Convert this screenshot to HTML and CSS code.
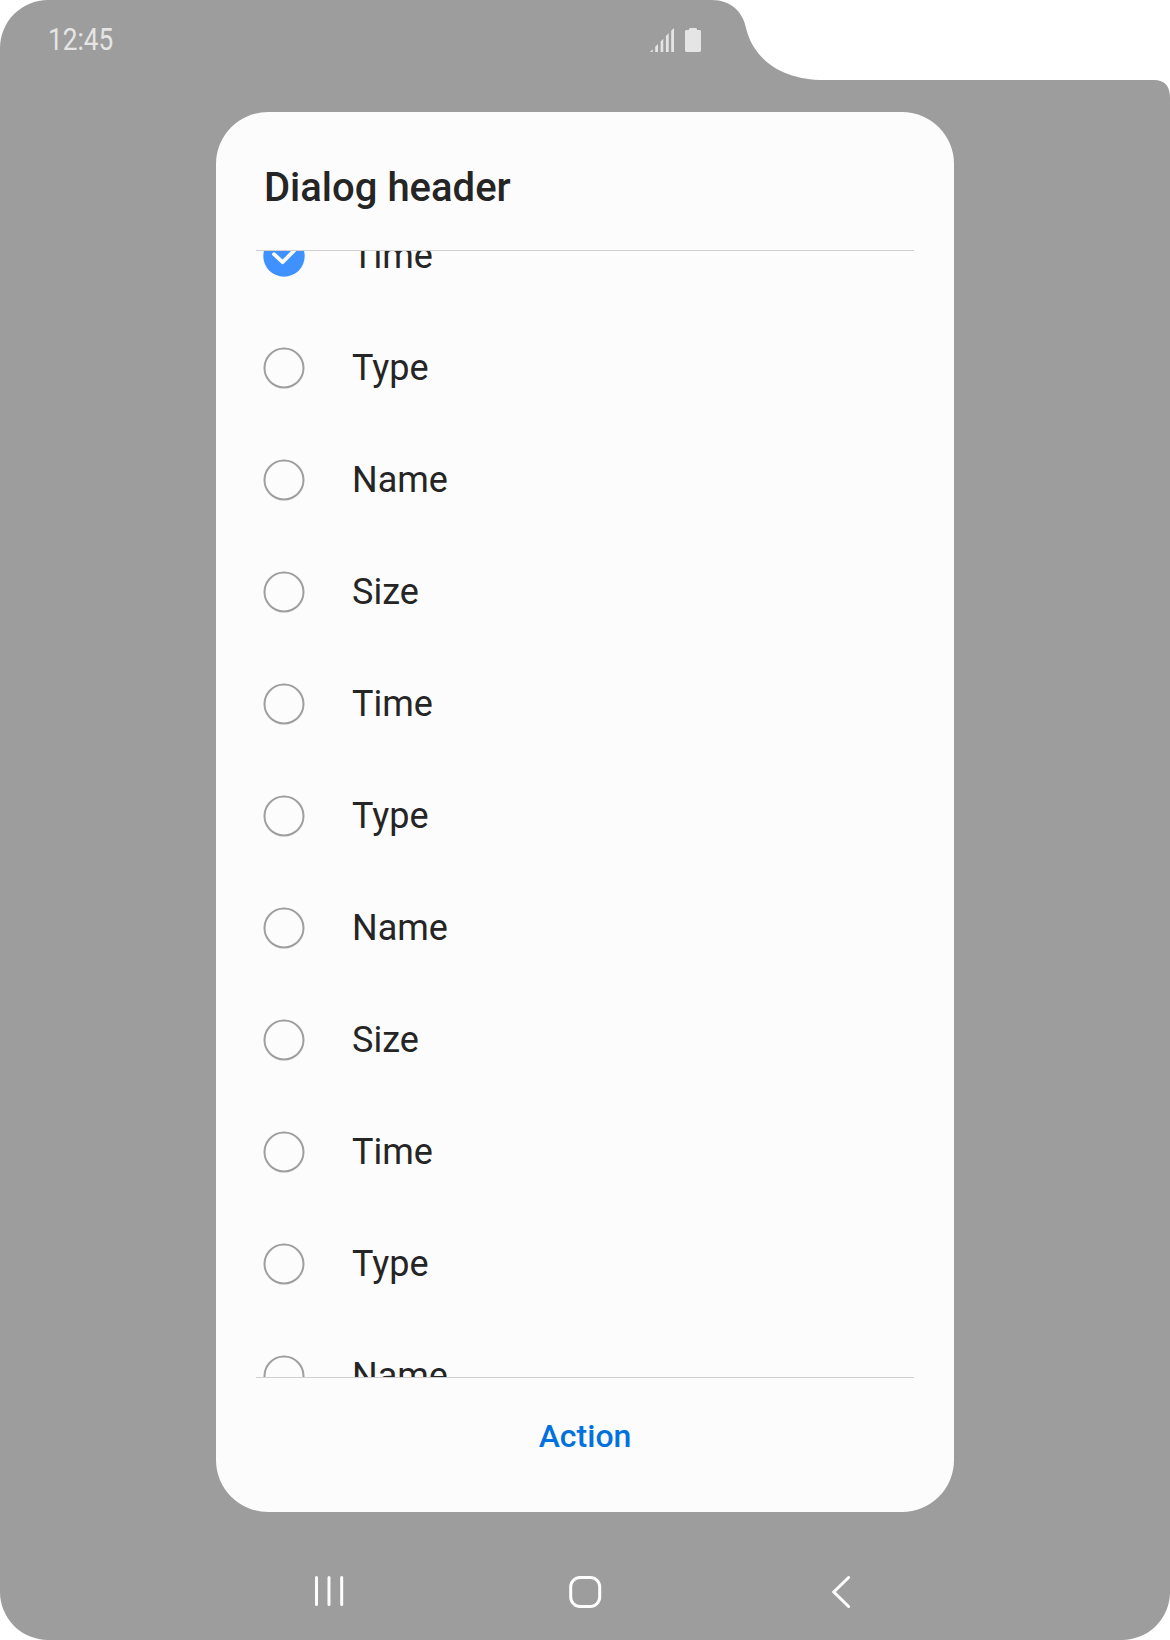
FILE: index.html
```html
<!DOCTYPE html>
<html lang="en">
<head>
<meta charset="utf-8">
<title>Dialog</title>
<link rel="stylesheet" href="styles.css">
</head>
<body>
<div class="screen">
  <svg class="backdrop" viewBox="0 0 1170 1640" aria-hidden="true">
    <path fill="#9d9d9d" d="M48 0H712C731 0 743 12 746 28C753 58 780 80 825 80H1154Q1170 80 1170 98V1592A48 48 0 0 1 1122 1640H48A48 48 0 0 1 0 1592V48A48 48 0 0 1 48 0Z"/>
  </svg>
  <header class="status">
    <span class="clock">12:45</span>
    <span class="indicators">
      <svg width="24" height="24" viewBox="0 0 24 24"><path d="M0 24L2.7 21.3V24ZM5.2 24V18.8L8 16V24ZM10.6 24V13.4L13.3 10.7V24ZM15.9 24V8.1L18.7 5.3V24ZM21.2 24V2.8L24 0V24Z"/></svg>
      <svg width="16" height="24" viewBox="0 0 16 24"><path d="M4 2V1.4Q4 0 5.4 0H10.6Q12 0 12 1.4V2H14.6Q16 2 16 3.4V22.6Q16 24 14.6 24H1.4Q0 24 0 22.6V3.4Q0 2 1.4 2Z"/></svg>
    </span>
  </header>
  <main class="dialog">
    <h1 class="title">Dialog header</h1>
    <div class="list">
      <label class="row"><svg class="radio checked" viewBox="0 0 42 42"><circle cx="21" cy="21" r="20.7"/><path d="M11 19.2L19.6 27.2L32.2 14.5"/></svg>Time</label>
      <label class="row"><svg class="radio" viewBox="0 0 42 42"><circle cx="21" cy="21" r="19.5"/></svg>Type</label>
      <label class="row"><svg class="radio" viewBox="0 0 42 42"><circle cx="21" cy="21" r="19.5"/></svg>Name</label>
      <label class="row"><svg class="radio" viewBox="0 0 42 42"><circle cx="21" cy="21" r="19.5"/></svg>Size</label>
      <label class="row"><svg class="radio" viewBox="0 0 42 42"><circle cx="21" cy="21" r="19.5"/></svg>Time</label>
      <label class="row"><svg class="radio" viewBox="0 0 42 42"><circle cx="21" cy="21" r="19.5"/></svg>Type</label>
      <label class="row"><svg class="radio" viewBox="0 0 42 42"><circle cx="21" cy="21" r="19.5"/></svg>Name</label>
      <label class="row"><svg class="radio" viewBox="0 0 42 42"><circle cx="21" cy="21" r="19.5"/></svg>Size</label>
      <label class="row"><svg class="radio" viewBox="0 0 42 42"><circle cx="21" cy="21" r="19.5"/></svg>Time</label>
      <label class="row"><svg class="radio" viewBox="0 0 42 42"><circle cx="21" cy="21" r="19.5"/></svg>Type</label>
      <label class="row"><svg class="radio" viewBox="0 0 42 42"><circle cx="21" cy="21" r="19.5"/></svg>Name</label>
    </div>
    <button class="action">Action</button>
  </main>
  <nav class="navbar">
    <svg width="36" height="36" viewBox="0 0 36 36"><path d="M5.5 3.5V30.5M18 3.5V30.5M30.7 3.5V30.5"/></svg>
    <svg width="36" height="36" viewBox="0 0 36 36"><rect x="3.7" y="3.5" width="29" height="29" rx="9.5"/></svg>
    <svg width="36" height="36" viewBox="0 0 36 36"><path d="M25.6 3.5L10.8 18L25.6 32.5"/></svg>
  </nav>
</div>
</body>
</html>
```
FILE: styles.css
```css
* { box-sizing: border-box; }

body {
  margin: 0;
  background: #fff;
  font-family: Roboto, "Liberation Sans", sans-serif;
}

.screen {
  position: relative;
  display: flex;
  flex-direction: column;
  width: 1170px;
  height: 1640px;
  overflow: hidden;
}

.backdrop {
  position: absolute;
  inset: 0;
  z-index: -1;
}

.status {
  display: flex;
  align-items: center;
  justify-content: space-between;
  width: 701px;
  height: 80px;
  padding-left: 48px;
}

.clock {
  font-size: 31px;
  line-height: 36px;
  color: #e5e5e5;
  transform: scaleX(0.845);
  transform-origin: left;
}

.indicators {
  display: flex;
  gap: 11px;
  fill: #e5e5e5;
}

.dialog {
  display: flex;
  flex-direction: column;
  width: 738px;
  height: 1400px;
  margin: 32px auto 0;
  padding: 0 40px;
  border-radius: 52px;
  background: #fcfcfc;
  color: #252525;
}

.title {
  height: 138px;
  margin: 0;
  padding: 13px 8px 0;
  font-size: 40px;
  font-weight: 500;
  line-height: 125px;
}

.list {
  display: flex;
  flex-direction: column;
  justify-content: center;
  height: 1128px;
  border-top: 1px solid #d0d0d0;
  border-bottom: 1px solid #d0d0d0;
  overflow: hidden;
}

.row {
  display: flex;
  flex: none;
  align-items: center;
  gap: 47px;
  height: 112px;
  padding-left: 7px;
  font-size: 36px;
}

.list .row:first-child { margin-top: 3px; }

.radio {
  width: 42px;
  height: 42px;
  fill: none;
  stroke: #9f9f9f;
  stroke-width: 2;
}

.checked circle {
  fill: #3e91ff;
  stroke: none;
}

.checked path {
  stroke: #fcfcfc;
  stroke-width: 3.8;
  stroke-linecap: round;
  stroke-linejoin: round;
}

.action {
  flex: 1;
  padding: 0 0 18px;
  border: 0;
  background: none;
  color: #0072de;
  font: 500 32px Roboto, "Liberation Sans", sans-serif;
}

.navbar {
  display: flex;
  justify-content: center;
  gap: 220px;
  padding-top: 62px;
  fill: none;
  stroke: #fff;
  stroke-width: 3;
  stroke-linecap: round;
}
```
